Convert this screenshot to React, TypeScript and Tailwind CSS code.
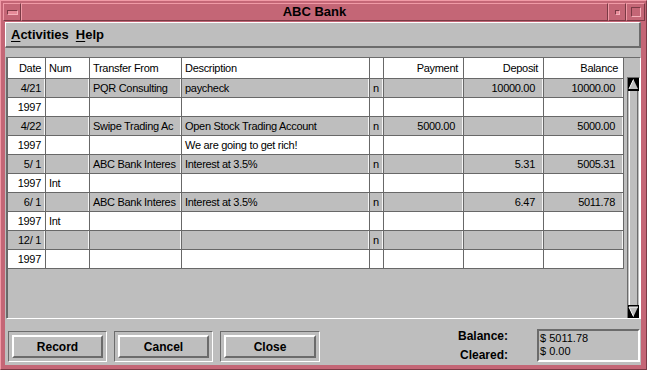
import React from "react";

type Row = {
  g: boolean;
  d: string;
  num?: string;
  tr?: string;
  desc?: string;
  r?: string;
  pay?: string;
  dep?: string;
  bal?: string;
};

const rows: Row[] = [
  { g: true, d: "4/21", tr: "PQR Consulting", desc: "paycheck", r: "n", dep: "10000.00", bal: "10000.00" },
  { g: false, d: "1997" },
  { g: true, d: "4/22", tr: "Swipe Trading Ac", desc: "Open Stock Trading Account", r: "n", pay: "5000.00", bal: "5000.00" },
  { g: false, d: "1997", desc: "We are going to get rich!" },
  { g: true, d: "5/ 1", tr: "ABC Bank Interes", desc: "Interest at 3.5%", r: "n", dep: "5.31", bal: "5005.31" },
  { g: false, d: "1997", num: "Int" },
  { g: true, d: "6/ 1", tr: "ABC Bank Interes", desc: "Interest at 3.5%", r: "n", dep: "6.47", bal: "5011.78" },
  { g: false, d: "1997", num: "Int" },
  { g: true, d: "12/ 1", r: "n" },
  { g: false, d: "1997" },
];

function Cells({ vals, gray, header }: { vals: string[]; gray: boolean; header?: boolean }) {
  const base = "h-full flex items-center border-r border-[#686868] whitespace-pre overflow-hidden";
  const g = gray ? " bg-[#bebebe] shadow-[inset_-1px_0_0_#f4f4f4]" : " bg-white";
  const amt = header ? " justify-end pr-[5px]" : " justify-end pr-[8px]";
  return (
    <>
      <div className={base + g + " w-[38px] justify-end pr-[4px]"}>{vals[0]}</div>
      <div className={base + g + " w-[44px] pl-[3px]"}>{vals[1]}</div>
      <div className={base + g + " w-[92px] pl-[3px]"}>{vals[2]}</div>
      <div className={base + g + " w-[188px] pl-[3px]"}>{vals[3]}</div>
      <div className={base + g + " w-[14px] pl-[3px]"}>{vals[4]}</div>
      <div className={base + g + " w-[80px]" + amt}>{vals[5]}</div>
      <div className={base + g + " w-[80px]" + amt}>{vals[6]}</div>
      <div className={base + g + " w-[80px]" + amt}>{vals[7]}</div>
    </>
  );
}

function Btn({ label, wide }: { label: string; wide?: boolean }) {
  return (
    <div
      className={
        (wide ? "w-[100px]" : "w-[99px]") +
        " h-[31px] border border-t-[#6b6b6b] border-l-[#6b6b6b] border-b-white border-r-white p-[3px]"
      }
    >
      <div className="w-full h-full border-2 border-t-white border-l-white border-b-[#6b6b6b] border-r-[#6b6b6b] flex items-center justify-center font-bold text-[12px] text-black">
        {label}
      </div>
    </div>
  );
}

function Arrow({ up }: { up: boolean }) {
  return (
    <svg width="11" height="13" viewBox="0 0 11 13" className="block">
      <rect x="0" y="0" width="11" height="13" fill="#000" />
      {up ? (
        <>
          <polygon points="5.5,1.5 10,11 1,11" fill="#bebebe" />
          <polyline points="1,11 5.5,1.5" stroke="#fff" strokeWidth="1" fill="none" />
        </>
      ) : (
        <>
          <polygon points="1,2 10,2 5.5,11.5" fill="#bebebe" />
          <polyline points="1,2 10,2" stroke="#fff" strokeWidth="1" fill="none" />
          <polyline points="1,2 5.5,11.5" stroke="#fff" strokeWidth="1" fill="none" />
        </>
      )}
    </svg>
  );
}

export default function App() {
  return (
    <div className="w-[647px] h-[370px] bg-[#c46676] overflow-hidden font-['Liberation_Sans',Arial,sans-serif] text-black border-t border-l border-t-[#f09aa6] border-l-[#f09aa6] border-r border-b border-r-[#7a3a45] border-b-[#7a3a45] box-border">
      {/* Title bar */}
      <div className="h-[21px] flex pt-[2px] pl-[2px] pr-[1px]">
        <div className="w-[18px] h-[18px] border border-t-[#f09aa6] border-l-[#f09aa6] border-b-[#7a3a45] border-r-[#7a3a45] flex items-center justify-center">
          <div className="w-[9px] h-[3px] bg-[#e68a98] border border-t-[#7a3a45] border-l-[#7a3a45] border-b-[#f5b0b9] border-r-[#f5b0b9] box-content" />
        </div>
        <div className="flex-1 h-[18px] border border-t-[#f09aa6] border-l-[#f09aa6] border-b-[#7a3a45] border-r-[#7a3a45] flex items-center justify-center font-bold text-[13px]">
          ABC Bank
        </div>
        <div className="w-[18px] h-[18px] border border-t-[#f09aa6] border-l-[#f09aa6] border-b-[#7a3a45] border-r-[#7a3a45] flex items-center justify-center">
          <div className="w-[3px] h-[3px] bg-[#e68a98] border border-t-[#7a3a45] border-l-[#7a3a45] border-b-[#f5b0b9] border-r-[#f5b0b9] box-content" />
        </div>
        <div className="w-[19px] h-[18px] border border-t-[#f09aa6] border-l-[#f09aa6] border-b-[#7a3a45] border-r-[#7a3a45] flex items-center justify-center">
          <div className="w-[8px] h-[8px] border border-t-[#7a3a45] border-l-[#7a3a45] border-b-[#f5b0b9] border-r-[#f5b0b9] box-content" />
        </div>
      </div>

      {/* Content */}
      <div className="ml-[4px] mt-[0px] w-[636px] h-[343px] bg-[#bebebe] flex flex-col text-[11px] tracking-[-0.3px]">
        {/* Menu bar */}
        <div className="h-[26px] border-t border-l border-t-white border-l-white border-b-2 border-r-2 border-b-[#6b6b6b] border-r-[#6b6b6b] flex items-center pl-[5px] gap-[7px] font-bold text-[13px] tracking-normal">
          <span>
            <span className="underline underline-offset-2">A</span>ctivities
          </span>
          <span>
            <span className="underline underline-offset-2">H</span>elp
          </span>
        </div>

        {/* Register region */}
        <div className="ml-[1px] mt-[9px] w-[635px] h-[262px] border border-t-[#6b6b6b] border-l-[#6b6b6b] border-b-white border-r-white flex">
          <div className="w-[617px] flex flex-col border-l border-[#686868]">
            <div className="h-[21px] flex border-b border-[#686868] bg-white">
              <Cells header gray={false} vals={["Date", "Num", "Transfer From", "Description", "", "Payment", "Deposit", "Balance"]} />
            </div>
            {rows.map((r, i) => (
              <div key={i} className="h-[19px] flex border-b border-[#686868]">
                <Cells
                  gray={r.g}
                  vals={[r.d, r.num ?? "", r.tr ?? "", r.desc ?? "", r.r ?? "", r.pay ?? "", r.dep ?? "", r.bal ?? ""]}
                />
              </div>
            ))}
          </div>
          <div className="ml-[3px] mt-[19px] w-[13px] flex flex-col border-l border-t border-l-[#6b6b6b] border-t-[#6b6b6b] border-r border-r-white">
            <Arrow up />
            <div className="flex-1 mx-[1px] border-l border-r border-l-white border-r-[#6b6b6b]" />
            <Arrow up={false} />
          </div>
        </div>

        {/* Bottom */}
        <div className="mt-[10px] flex pl-[3px] tracking-normal">
          <div className="flex gap-[7px] mt-[2px]">
            <Btn label="Record" />
            <Btn label="Cancel" />
            <Btn label="Close" wide />
          </div>
          <div className="flex-1 flex flex-col items-end gap-[4px] font-bold text-[12px] leading-[15px] pr-[29px]">
            <span>Balance:</span>
            <span>Cleared:</span>
          </div>
          <div className="w-[103px] h-[33px] border-2 border-t-[#6b6b6b] border-l-[#6b6b6b] border-b-white border-r-white pl-[1px] pt-[1px] text-[11px] leading-[13px] mr-[1px]">
            <div>$ 5011.78</div>
            <div>$ 0.00</div>
          </div>
        </div>
      </div>
    </div>
  );
}
